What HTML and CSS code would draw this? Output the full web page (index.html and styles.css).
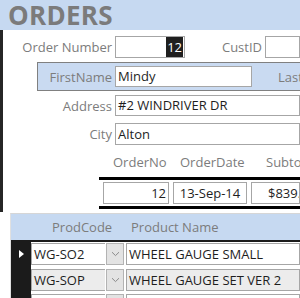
FILE: index.html
```html
<!DOCTYPE html>
<html lang="en">
<head>
    <meta charset="UTF-8">
    <meta name="viewport" content="width=device-width, initial-scale=1.0">
    <title>Orders</title>
    <link rel="stylesheet" href="styles.css">
</head>
<body>
    <div class="form">
        <div class="form-header">
            <h1>ORDERS</h1>
        </div>

        <div class="detail">
            <div class="row row-top">
                <span class="lbl">Order Number</span>
                <div class="field field-num"><span class="sel">12</span></div>
                <span class="lbl lbl-cust">CustID</span>
                <div class="field field-grow"></div>
            </div>

            <div class="name-box">
                <span class="lbl">FirstName</span>
                <div class="field field-first">Mindy</div>
                <span class="lbl lbl-last">Last</span>
            </div>

            <div class="row row-address">
                <span class="lbl">Address</span>
                <div class="field field-grow">#2 WINDRIVER DR</div>
            </div>

            <div class="row row-city">
                <span class="lbl">City</span>
                <div class="field field-grow">Alton</div>
            </div>

            <!-- order totals strip -->
            <div class="totals">
                <div class="totals-head">
                    <span class="head-no">OrderNo</span>
                    <span class="head-date">OrderDate</span>
                    <span class="head-sub">Subtotal</span>
                </div>
                <div class="totals-row">
                    <div class="field box-no">12</div>
                    <div class="field box-date">13-Sep-14</div>
                    <div class="field box-sub">$839.00</div>
                </div>
            </div>
        </div>

        <!-- order lines subform -->
        <div class="subform">
            <div class="sub-head">
                <span class="h-code">ProdCode</span>
                <span class="h-name">Product Name</span>
            </div>
            <div class="sub-body">
                <div class="line current">
                    <div class="selector"><span class="arrow"></span></div>
                    <div class="combo">
                        <div class="field combo-text">WG-SO2</div>
                        <div class="combo-btn">
                            <svg width="9" height="6" viewBox="0 0 9 6"><path d="M1 1.2 L4.5 4.6 L8 1.2" fill="none" stroke="#8a8a8a" stroke-width="1"/></svg>
                        </div>
                    </div>
                    <div class="field prod-name">WHEEL GAUGE SMALL</div>
                </div>
                <div class="line alt">
                    <div class="selector"></div>
                    <div class="combo">
                        <div class="field combo-text">WG-SOP</div>
                        <div class="combo-btn">
                            <svg width="9" height="6" viewBox="0 0 9 6"><path d="M1 1.2 L4.5 4.6 L8 1.2" fill="none" stroke="#8a8a8a" stroke-width="1"/></svg>
                        </div>
                    </div>
                    <div class="field prod-name">WHEEL GAUGE SET VER 2</div>
                </div>
                <div class="line">
                    <div class="selector"></div>
                    <div class="combo">
                        <div class="field combo-text"></div>
                        <div class="combo-btn"></div>
                    </div>
                    <div class="field prod-name"></div>
                </div>
            </div>
        </div>
    </div>
</body>
</html>
```

FILE: styles.css
```css
body {
    margin: 0;
    padding: 0;
    font-family: 'Open Sans', 'Noto Sans', sans-serif;
    font-size: 13px;
    color: #1e1e1e;
    background-color: #ffffff;
    overflow: hidden;
}

.form {
    width: 300px;
    height: 298px;
    overflow: hidden;
}

/* Header band */
.form-header {
    height: 30px;
    background-color: #c6d9f1;
    padding-left: 8px;
}

.form-header h1 {
    margin: 0;
    font-size: 26px;
    line-height: 30px;
    font-weight: 700;
    color: #7b7b7b;
    letter-spacing: 0.3px;
}

/* Detail section */
.detail {
    border-left: 3px solid #262626;
    height: 182px;
    overflow: hidden;
}

.row {
    display: flex;
    align-items: center;
    white-space: nowrap;
}

.lbl {
    color: #7c7c7c;
    text-align: right;
    flex: none;
}

.row .lbl {
    width: 109px;
    margin-right: 3px;
}

.field {
    box-sizing: border-box;
    border: 1px solid #a6a6a6;
    background-color: #ffffff;
    height: 22px;
    line-height: 20px;
    padding: 0 2px;
    white-space: nowrap;
    overflow: hidden;
}

.row-top {
    margin-top: 6px;
}

.field-num {
    width: 70px;
    flex: none;
    text-align: right;
    padding-right: 1px;
}

.sel {
    background-color: #1f1f1f;
    color: #ffffff;
    padding: 2px 1px;
}

.row-top .lbl-cust {
    width: 77px;
    margin-right: 3px;
}

.field-grow {
    flex: 1;
}

.name-box {
    display: flex;
    align-items: center;
    margin-top: 4px;
    margin-left: 34px;
    height: 29px;
    box-sizing: border-box;
    border: 1px solid #808080;
    border-right: none;
    background-color: #c9daf1;
    white-space: nowrap;
}

.name-box .lbl {
    width: 74px;
    margin-right: 3px;
}

.field-first {
    width: 137px;
    flex: none;
    height: 21px;
    line-height: 19px;
}

.name-box .lbl-last {
    width: auto;
    margin-left: 26px;
    text-align: left;
}

.row-address {
    margin-top: 4px;
}

.row-address .field {
    height: 21px;
    line-height: 19px;
}

.row-city {
    margin-top: 7px;
}

/* Totals strip */
.totals {
    margin-left: 96px;
}

.totals-head {
    display: flex;
    height: 32px;
    align-items: center;
    padding-top: 2px;
    box-sizing: border-box;
    color: #7c7c7c;
    white-space: nowrap;
}

.head-no {
    width: 81px;
    padding-left: 14px;
    box-sizing: border-box;
    flex: none;
}

.head-date {
    width: 86px;
    flex: none;
}

.totals-row {
    display: flex;
    gap: 4px;
    border-top: 3px solid #000000;
    border-bottom: 3px solid #000000;
    padding: 2px 0 2px 4px;
}

.box-no {
    width: 66px;
    flex: none;
    text-align: right;
}

.box-date {
    width: 74px;
    flex: none;
    text-align: center;
}

.box-sub {
    flex: 1;
    padding-left: 16px;
}

/* Subform */
.subform {
    margin-left: 10px;
    margin-top: 1px;
    border-top: 1px solid #d6d6d6;
    border-left: 1px solid #e0e0e0;
    background-color: #ffffff;
}

.sub-head {
    display: flex;
    align-items: center;
    height: 26px;
    background-color: #c6d9f1;
    color: #7c7c7c;
    white-space: nowrap;
}

.h-code {
    padding-left: 41px;
    width: 120px;
    box-sizing: border-box;
}

.line {
    display: flex;
    height: 25px;
    align-items: flex-start;
}

.line:first-child {
    border-top: 2px solid #1b1b1b;
}

.selector {
    width: 20px;
    height: 25px;
    flex: none;
    background-color: #1b1b1b;
    display: flex;
    align-items: center;
    justify-content: center;
}

.arrow {
    width: 0;
    height: 0;
    border-top: 4px solid transparent;
    border-bottom: 4px solid transparent;
    border-left: 5px solid #ffffff;
    margin-top: -2px;
}

.combo {
    display: flex;
    width: 93px;
    flex: none;
    margin-top: 2px;
}

.combo-text {
    flex: 1;
    border-right: none;
}

.combo-btn {
    width: 18px;
    height: 22px;
    box-sizing: border-box;
    border: 1px solid #b3b3b3;
    background-color: #e3e3e3;
    display: flex;
    align-items: center;
    justify-content: center;
    margin-left: 1px;
}

.prod-name {
    flex: 1;
    margin-left: 2px;
    margin-top: 2px;
}

.line.current .combo,
.line.current .prod-name {
    margin-top: 1px;
}

.alt .field {
    background-color: #ececec;
}
```
